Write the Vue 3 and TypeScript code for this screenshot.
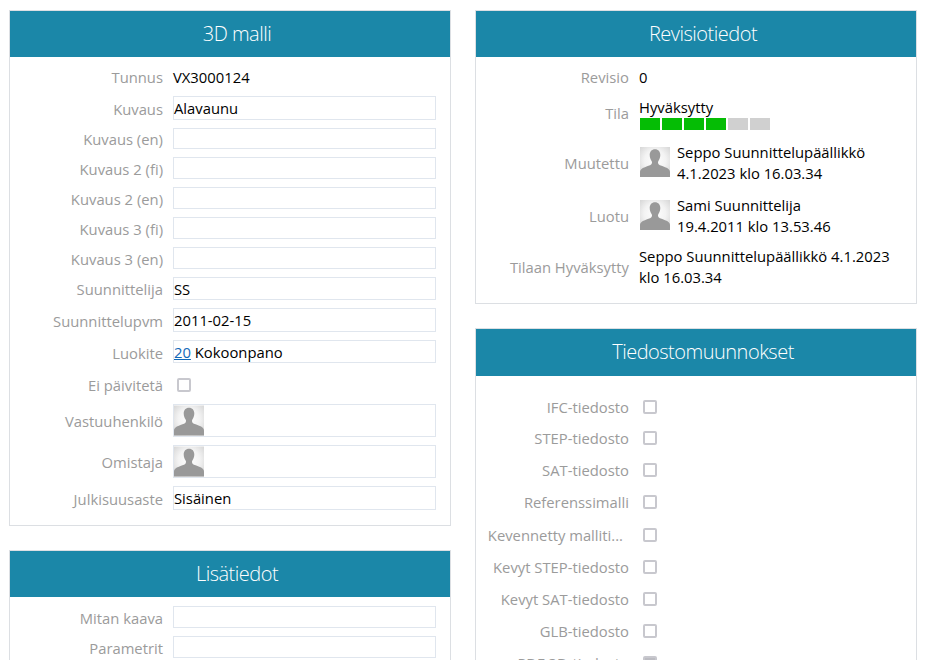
<script setup lang="ts">
interface Field {
  label: string
  value?: string
}
const modelA: Field[] = [
  { label: 'Kuvaus (en)' },
  { label: 'Kuvaus 2 (fi)' },
  { label: 'Kuvaus 2 (en)' },
  { label: 'Kuvaus 3 (fi)' },
  { label: 'Kuvaus 3 (en)' },
]
const modelB: Field[] = [
  { label: 'Suunnittelija', value: 'SS' },
  { label: 'Suunnittelupvm', value: '2011-02-15' },
]
const conversions = [
  'IFC-tiedosto',
  'STEP-tiedosto',
  'SAT-tiedosto',
  'Referenssimalli',
  'Kevennetty malliti...',
  'Kevyt STEP-tiedosto',
  'Kevyt SAT-tiedosto',
  'GLB-tiedosto',
]
const steps = [true, true, true, true, false, false]
</script>

<template>
  <div class="page">
    <div class="col">
      <section class="panel">
        <h2 class="head">3D malli</h2>
        <div class="body">
          <div class="row plain"><span class="lab">Tunnus</span><span class="val">VX3000124</span></div>
          <div class="row boxed"><span class="lab">Kuvaus</span><div class="box filled">Alavaunu</div></div>
          <div v-for="f in modelA" :key="f.label" class="row boxed"><span class="lab">{{ f.label }}</span><div class="box"></div></div>
          <div v-for="f in modelB" :key="f.label" class="row boxed"><span class="lab">{{ f.label }}</span><div class="box filled">{{ f.value }}</div></div>
          <div class="row boxed"><span class="lab">Luokite</span><div class="box filled"><a class="link">20</a> Kokoonpano</div></div>
          <div class="row boxed check"><span class="lab">Ei päivitetä</span><span class="cb"></span></div>
          <div class="row"><span class="lab">Vastuuhenkilö</span><div class="box person"><svg class="ava" viewBox="0 0 30 30"><use href="#ava" /></svg></div></div>
          <div class="row"><span class="lab">Omistaja</span><div class="box person"><svg class="ava" viewBox="0 0 30 30"><use href="#ava" /></svg></div></div>
          <div class="row boxed"><span class="lab">Julkisuusaste</span><div class="box filled">Sisäinen</div></div>
        </div>
      </section>
      <section class="panel">
        <h2 class="head">Lisätiedot</h2>
        <div class="body">
          <div class="row boxed"><span class="lab">Mitan kaava</span><div class="box"></div></div>
          <div class="row boxed"><span class="lab">Parametrit</span><div class="box"></div></div>
        </div>
      </section>
    </div>
    <div class="col">
      <section class="panel">
        <h2 class="head">Revisiotiedot</h2>
        <div class="body rev">
          <div class="row plain"><span class="lab">Revisio</span><span class="val">0</span></div>
          <div class="row state">
            <span class="lab">Tila</span>
            <div class="val">
              <div class="state-name">Hyväksytty</div>
              <div class="steps"><i v-for="(on, i) in steps" :key="i" :class="{ on }"></i></div>
            </div>
          </div>
          <div class="row who boxed">
            <span class="lab">Muutettu</span>
            <div class="val whoval">
              <svg class="ava" viewBox="0 0 30 30"><use href="#ava" /></svg>
              <div class="whotext">Seppo Suunnittelupäällikkö<br />4.1.2023 klo 16.03.34</div>
            </div>
          </div>
          <div class="row who boxed">
            <span class="lab">Luotu</span>
            <div class="val whoval">
              <svg class="ava" viewBox="0 0 30 30"><use href="#ava" /></svg>
              <div class="whotext">Sami Suunnittelija<br />19.4.2011 klo 13.53.46</div>
            </div>
          </div>
          <div class="row long">
            <span class="lab">Tilaan Hyväksytty</span>
            <div class="val">Seppo Suunnittelupäällikkö 4.1.2023 klo 16.03.34</div>
          </div>
        </div>
      </section>
      <section class="panel">
        <h2 class="head">Tiedostomuunnokset</h2>
        <div class="body conv">
          <div v-for="c in conversions" :key="c" class="row cv" :class="{ cutrow: c.endsWith('...') }">
            <span class="lab" :class="{ cut: c.endsWith('...') }">{{ c }}</span><span class="cb"></span>
          </div>
          <div class="row cv">
            <span class="lab">PDF 3D-tiedosto</span><span class="cb on"></span>
          </div>
        </div>
      </section>
    </div>
    <svg class="defs" width="0" height="0" aria-hidden="true">
      <defs>
        <radialGradient id="avabg" cx="50%" cy="45%" r="65%">
          <stop offset="0" stop-color="#ffffff" />
          <stop offset="0.55" stop-color="#f3f3f3" />
          <stop offset="1" stop-color="#d8d8d8" />
        </radialGradient>
        <g id="ava">
          <rect width="30" height="30" fill="url(#avabg)" />
          <path d="M15 2.200c-3.300 0-5.300 2.400-5.300 5.700 0 2.300.8 4.400 1.900 6 .5.8.6 1.700.2 2.600-.4 1-1.300 1.600-2.600 2.100C6.500 19.600 3 20.800 1.300 22.200.4 23 0 24 0 25.300V30h30v-4.700c0-1.300-.4-2.300-1.300-3.100-1.700-1.400-5.200-2.600-7.900-3.600-1.300-.5-2.200-1.100-2.600-2.100-.4-.9-.3-1.800.2-2.600 1.100-1.600 1.900-3.700 1.900-6 0-3.300-2-5.700-5.300-5.700z" fill="#999999" />
        </g>
      </defs>
    </svg>
  </div>
</template>

<style>
html, body { margin: 0; background: #fff; overflow: hidden; }
</style>

<style scoped>
.page {
  display: flex;
  gap: 24px;
  padding: 10px 0 0 9px;
  width: 928px;
  height: 660px;
  box-sizing: border-box;
  overflow: hidden;
  font-family: "Open Sans", "Noto Sans", sans-serif;
  font-size: 14.8px;
  color: #000;
}
.defs { position: absolute; }
.col { width: 442px; display: flex; flex-direction: column; gap: 24px; flex: none; }
.panel { border: 1px solid #dcdfe3; background: #fff; flex: none; }
.head {
  margin: 0;
  height: 46.4px;
  line-height: 46px;
  padding-left: 14px;
  box-sizing: border-box;
  background: #1b87a8;
  color: #fff;
  text-align: center;
  font-size: 20px;
  font-weight: 300;
  letter-spacing: -0.5px;
}
.body { padding: 8.6px 14px 15px 0; display: flex; flex-direction: column; gap: 8px; }
.row { display: flex; align-items: center; }
.lab { width: 153px; flex: none; text-align: right; color: #9b9b9b; margin-right: 10px; white-space: nowrap; line-height: 18px; }
.boxed .lab { padding-top: 2px; }
.val { flex: 1; }
.plain { height: 22px; }
.box {
  flex: 1;
  height: 21.8px;
  box-sizing: border-box;
  border: 1px solid #e0e6ee;
  line-height: 21px;
  white-space: nowrap;
}
.filled { height: 23.6px; line-height: 23px; }
.link { color: #1168b8; text-decoration: underline; }
.check { height: 25px; }
.check .cb { margin-top: 3px; }
.cb {
  width: 14px;
  height: 14px;
  box-sizing: border-box;
  border: 2px solid #c8c8ce;
  border-radius: 2px;
  margin-left: 4px;
  flex: none;
}
.cb.on { background: #bcbcc2; }
.person { height: 33px; }
.person .ava { width: 30px; height: 31px; display: block; }
.ava { width: 30px; height: 30px; flex: none; }
.rev { gap: 0; padding-bottom: 15.2px; padding-right: 24px; }
.state { margin-top: 9px; }
.state .val { padding-left: 1px; }
.state-name { line-height: 21px; margin-left: -1px; }
.steps { display: flex; gap: 2px; height: 12px; }
.steps i { width: 20px; background: #d0d0d0; }
.steps i.on { background: #05bd05; }
.who { margin-top: 11px; }
.whoval { display: flex; align-items: center; gap: 7px; line-height: 21px; padding-left: 1px; }
.whoval .whotext { margin: 1px 0 -1px; }
.long { margin-top: 10px; line-height: 21px; }
.conv { gap: 0; padding-top: 15.4px; }
.cv { height: 32px; flex: none; }
.cv:first-child { margin-bottom: -1px; }
.cutrow { margin-top: 1px; }
.cut { padding-right: 6px; width: 147px; }
</style>
